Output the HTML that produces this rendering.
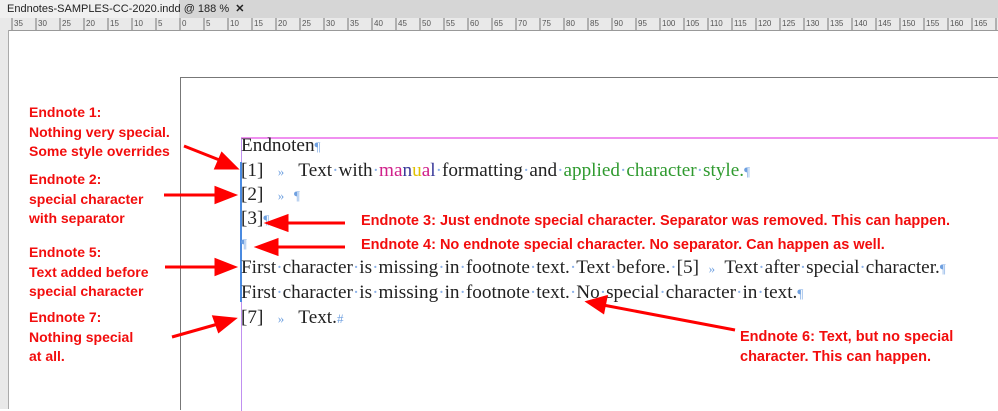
<!DOCTYPE html>
<html><head><style>
body{margin:0;width:998px;height:409px;overflow:hidden;background:#fff;position:relative;font-family:"Liberation Sans",sans-serif}
.a{position:absolute}
.tab{left:0;top:0;width:172px;height:18px;background:#f0f0f0;font-size:11px;line-height:19px;color:#222;padding-left:7px;white-space:nowrap}
.tabbar{left:0;top:0;width:998px;height:18px;background:#d6d6d6}
.ruler{left:0;top:18px;width:998px;height:12px;background:#e9e9e9;border-bottom:1px solid #999;font-size:8px;color:#555}
.vr{left:0;top:30px;width:8px;height:379px;background:#e9e9e9;border-right:1px solid #aaa}
.t{position:absolute;left:241px;font-family:"Liberation Serif",serif;font-size:19.2px;color:#222;white-space:nowrap;line-height:24px}
.b{color:#6fa0e0;font-size:13px}
i{font-style:normal;color:#8ab0e8}
.r{position:absolute;color:#f20d0d;font-weight:bold;font-size:14.5px;line-height:19.5px;white-space:nowrap}
.l{font-size:14px}
</style></head><body>
<div class="a tabbar"></div>
<div class="a tab">Endnotes-SAMPLES-CC-2020.indd @ 188 % &nbsp;<b>✕</b></div>
<div class="a ruler">
<svg width="998" height="12" style="position:absolute;left:0;top:0">
<g stroke="#777" stroke-width="1">
<path d="M12 0V12M36 0V12M60 0V12M84 0V12M108 0V12M132 0V12M156 0V12M180 0V12M204 0V12M228 0V12M252 0V12M276 0V12M300 0V12M324 0V12M348 0V12M372 0V12M396 0V12M420 0V12M444 0V12M468 0V12M492 0V12M516 0V12M540 0V12M564 0V12M588 0V12M612 0V12M636 0V12M660 0V12M684 0V12M708 0V12M732 0V12M756 0V12M780 0V12M804 0V12M828 0V12M852 0V12M876 0V12M900 0V12M924 0V12M948 0V12M972 0V12M996 0V12"/>
</g>
<g font-size="8" fill="#555" font-family="Liberation Sans">
<text x="14" y="8">35</text><text x="38" y="8">30</text><text x="62" y="8">25</text><text x="86" y="8">20</text><text x="110" y="8">15</text><text x="134" y="8">10</text><text x="158" y="8">5</text><text x="182" y="8">0</text><text x="206" y="8">5</text><text x="230" y="8">10</text><text x="254" y="8">15</text><text x="278" y="8">20</text><text x="302" y="8">25</text><text x="326" y="8">30</text><text x="350" y="8">35</text><text x="374" y="8">40</text><text x="398" y="8">45</text><text x="422" y="8">50</text><text x="446" y="8">55</text><text x="470" y="8">60</text><text x="494" y="8">65</text><text x="518" y="8">70</text><text x="542" y="8">75</text><text x="566" y="8">80</text><text x="590" y="8">85</text><text x="614" y="8">90</text><text x="638" y="8">95</text><text x="662" y="8">100</text><text x="686" y="8">105</text><text x="710" y="8">110</text><text x="734" y="8">115</text><text x="758" y="8">120</text><text x="782" y="8">125</text><text x="806" y="8">130</text><text x="830" y="8">135</text><text x="854" y="8">140</text><text x="878" y="8">145</text><text x="902" y="8">150</text><text x="926" y="8">155</text><text x="950" y="8">160</text><text x="974" y="8">165</text>
</g></svg></div>
<div class="a vr"></div>
<div class="a" style="left:180px;top:77px;width:818px;height:332px;border-left:1px solid #777;border-top:1px solid #777"></div>
<div class="a" style="left:241px;top:137px;width:757px;height:272px;border-left:1px solid #c090f0;border-top:2px solid #f090f0"></div>
<div class="a" style="left:240px;top:162px;width:3px;height:140px;border-left:2px solid #4a8ae0"></div>

<div class="t" style="top:134px">Endnoten<span class="b">¶</span></div>
<div class="t" style="top:159px">[1] &nbsp; <span class="b">»</span> &nbsp; Text<i>·</i>with<i>·</i><span style="color:#d0208a">ma</span><span style="color:#3a3a9a">n</span><span style="color:#e0c000">u</span><span style="color:#d0208a">a</span><span style="color:#3a3a9a">l</span><i>·</i>formatting<i>·</i>and<i>·</i><span style="color:#2f9a2f">applied<i>·</i>character<i>·</i>style.</span><span class="b">¶</span></div>
<div class="t" style="top:183px">[2] &nbsp; <span class="b">» &nbsp; ¶</span></div>
<div class="t" style="top:207px">[3]<span class="b">¶</span></div>
<div class="t" style="top:231px"><span class="b">¶</span></div>
<div class="t" style="top:256px">First<i>·</i>character<i>·</i>is<i>·</i>missing<i>·</i>in<i>·</i>footnote<i>·</i>text.<i>·</i>Text<i>·</i>before.<i>·</i>[5] &nbsp;<span class="b">»</span>&nbsp; Text<i>·</i>after<i>·</i>special<i>·</i>character.<span class="b">¶</span></div>
<div class="t" style="top:281px">First<i>·</i>character<i>·</i>is<i>·</i>missing<i>·</i>in<i>·</i>footnote<i>·</i>text.<i>·</i>No<i>·</i>special<i>·</i>character<i>·</i>in<i>·</i>text.<span class="b">¶</span></div>
<div class="t" style="top:306px">[7] &nbsp; <span class="b">»</span> &nbsp; Text.<span class="b">#</span></div>

<div class="r l" style="left:29px;top:103px">Endnote 1:<br>Nothing very special.<br>Some style overrides</div>
<div class="r l" style="left:29px;top:170px">Endnote 2:<br>special character<br>with separator</div>
<div class="r l" style="left:29px;top:243px">Endnote 5:<br>Text added before<br>special character</div>
<div class="r l" style="left:29px;top:308px">Endnote 7:<br>Nothing special<br>at all.</div>
<div class="r" style="left:361px;top:212px">Endnote 3: Just endnote special character. Separator was removed. This can happen.</div>
<div class="r" style="left:361px;top:236px">Endnote 4: No endnote special character. No separator. Can happen as well.</div>
<div class="r" style="left:740px;top:328px">Endnote 6: Text, but no special<br>character. This can happen.</div>

<svg class="a" style="left:0;top:0" width="998" height="409">
<g stroke="#f00" stroke-width="3" fill="#f00">
<line x1="184" y1="146" x2="222" y2="161"/><polygon points="236,168 216,168 222,154"/>
<line x1="164" y1="195" x2="218" y2="195"/><polygon points="234,195 216,188 216,202"/>
<line x1="165" y1="267" x2="218" y2="267"/><polygon points="234,267 216,260 216,274"/>
<line x1="172" y1="337" x2="218" y2="324"/><polygon points="234,319 214,317 219,331"/>
<line x1="345" y1="223" x2="285" y2="223"/><polygon points="268,223 287,216 287,230"/>
<line x1="345" y1="247" x2="275" y2="247"/><polygon points="258,247 277,240 277,254"/>
<line x1="735" y1="330" x2="603" y2="305"/><polygon points="588,302 606,297 603,312"/>
</g></svg>
</body></html>
